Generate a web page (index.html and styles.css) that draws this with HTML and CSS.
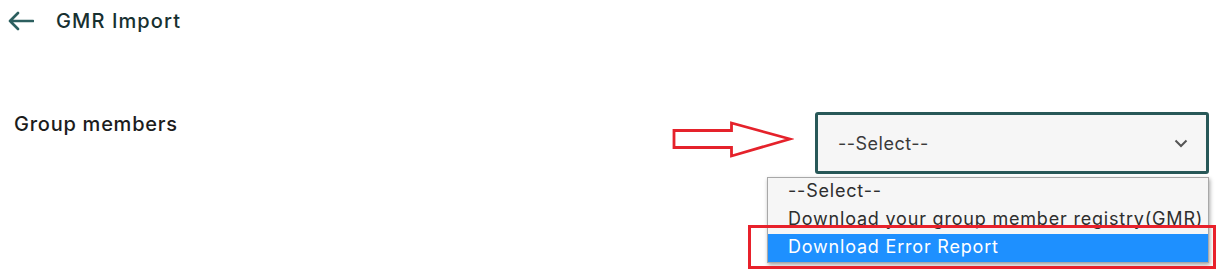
FILE: index.html
```html
<!DOCTYPE html>
<html lang="en">
<head>
<meta charset="utf-8">
<title>GMR Import</title>
<link rel="stylesheet" href="styles.css">
</head>
<body>
<header class="topbar">
  <svg class="back" width="26" height="20" viewBox="0 0 26 20" aria-hidden="true">
    <path d="M2 10 H25 M10 2 L2 10 L10 18" fill="none" stroke="#2c5f5f" stroke-width="2.6" stroke-linecap="round" stroke-linejoin="round"/>
  </svg>
  <h1 class="title">GMR Import</h1>
</header>
<section class="field-row">
  <label class="field-label">Group members</label>
  <div class="control">
    <svg class="pointer" width="122" height="40" viewBox="0 0 122 40" aria-hidden="true">
      <path d="M2 9.5 H59.5 V2 L118 18 L59.5 35 V26.5 H2 Z" fill="#fff" stroke="#e5222b" stroke-width="2.8" stroke-linejoin="miter"/>
    </svg>
    <div class="select-wrap">
      <div class="select">
        <span class="select-value">--Select--</span>
        <svg class="chevron" width="14" height="9" viewBox="0 0 14 9" aria-hidden="true">
          <path d="M1.5 1.5 L7 7 L12.5 1.5" fill="none" stroke="#555" stroke-width="2"/>
        </svg>
      </div>
      <ul class="options">
        <li class="option">--Select--</li>
        <li class="option">Download your group member registry(GMR)</li>
        <li class="option option-active">Download Error Report</li>
      </ul>
    </div>
  </div>
</section>
</body>
</html>
```
FILE: styles.css
```css
html, body {
  margin: 0;
  padding: 0;
  background: #ffffff;
  font-family: "Inter", "Noto Sans", sans-serif;
}

body {
  min-height: 279px;
}

.topbar {
  display: flex;
  align-items: center;
  gap: 22px;
  height: 42px;
  padding-left: 8px;
}

.back {
  display: block;
}

.title {
  margin: 0;
  font-size: 20px;
  font-weight: 500;
  color: #173030;
  letter-spacing: 1.1px;
}

.field-row {
  display: flex;
  justify-content: space-between;
  align-items: flex-start;
  padding: 70px 17px 0 14px;
}

.field-label {
  margin-top: 0;
  font-size: 20px;
  font-weight: 500;
  color: #1c1c1c;
  letter-spacing: 0.75px;
}

.control {
  display: flex;
  align-items: flex-start;
  gap: 21px;
}

.pointer {
  display: block;
  margin-top: 9px;
}

.select-wrap {
  width: 394px;
  display: flex;
  flex-direction: column;
}

.select {
  box-sizing: border-box;
  width: 394px;
  height: 62px;
  border: 3px solid #285858;
  border-radius: 3px;
  background: #f6f6f6;
  display: flex;
  align-items: center;
  justify-content: space-between;
  padding: 0 18px 0 20px;
}

.select-value {
  font-size: 18px;
  color: #3a3a3a;
  letter-spacing: 0.5px;
}

.chevron {
  display: block;
}

.options {
  width: 442px;
  box-sizing: border-box;
  margin: 3px 0 0 -48px;
  padding: 0;
  list-style: none;
  background: #f6f6f6;
  border: 1px solid #a8a8a8;
  box-shadow: 1px 2px 4px rgba(0, 0, 0, 0.35);
}

.option {
  position: relative;
  height: 28px;
  box-sizing: border-box;
  line-height: 26px;
  padding: 0 0 2px 20px;
  font-size: 18px;
  color: #2e2e2e;
  letter-spacing: 0.8px;
  white-space: nowrap;
}

.option-active {
  background: #1e90ff;
  color: #ffffff;
}

.option-active::after {
  content: "";
  position: absolute;
  top: -9px;
  left: -20px;
  right: -8px;
  bottom: -7px;
  border: 3px solid #e8212b;
}
```
